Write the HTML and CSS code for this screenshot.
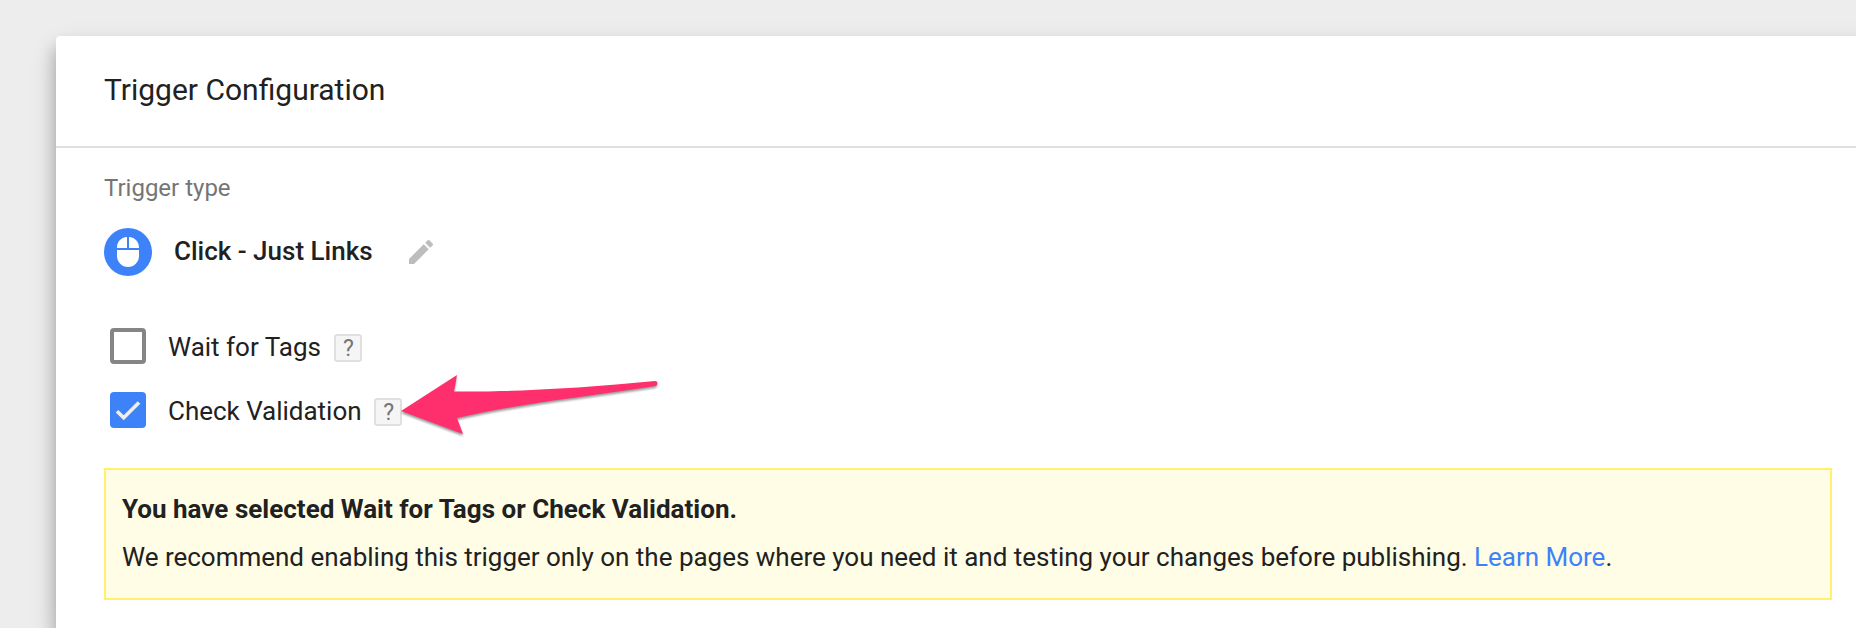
FILE: index.html
```html
<!DOCTYPE html>
<html lang="en">
<head>
<meta charset="utf-8">
<title>Trigger Configuration</title>
<link rel="stylesheet" href="styles.css">
</head>
<body>
<main class="card">
  <header class="card-header"><h1 class="title">Trigger Configuration</h1></header>
  <section class="content">
    <div class="label">Trigger type</div>
    <div class="type-row">
      <svg class="type-icon" viewBox="0 0 48 48">
        <circle cx="24" cy="24" r="24" fill="#3d82f8"/>
        <path fill="#fff" d="M13 20C13 13.500 17 9.500 23 9.100V20ZM25 9.100C31 9.500 35 13.500 35 20H25ZM13 22H35V28A11 11 0 0 1 13 28Z"/>
      </svg>
      <span class="type-name">Click - Just Links</span>
      <svg class="edit" viewBox="3 3 18 18">
        <path fill="#bdbdbd" d="M3 17.250V21h3.750L17.810 9.940l-3.750-3.750L3 17.250zM20.710 7.040c.39-.39.39-1.020 0-1.410l-2.340-2.340c-.39-.39-1.020-.39-1.410 0l-1.830 1.830 3.750 3.750 1.830-1.830z"/>
      </svg>
    </div>
    <div class="options">
      <div class="option">
        <span class="checkbox"></span>
        <span class="option-name">Wait for Tags</span>
        <span class="help">?</span>
      </div>
      <div class="option">
        <span class="checkbox checked">
          <svg class="tick" viewBox="0 0 36 36"><path d="M7 19.200L13.700 25.800L29 10.500" fill="none" stroke="#eee" stroke-width="3.600"/></svg>
        </span>
        <span class="option-name validation">Check Validation</span>
        <span class="help">?
          <svg class="arrow" viewBox="0 0 270 80">
            <path fill="#ff2e6c" d="M1 41L57 5L54 21.500C115 22 185 18 255 11Q257.500 11 257.500 13.300Q257.500 15.500 255 16C185 27 115 34 57 48L63 64Z"/>
          </svg>
        </span>
      </div>
    </div>
    <div class="notice">
      <div class="notice-title">You have selected Wait for Tags or Check Validation.</div>
      <div class="notice-text">We recommend enabling this trigger only on the pages where you need it and testing your changes before publishing. <a class="link" href="#">Learn More</a>.</div>
    </div>
  </section>
</main>
</body>
</html>
```
FILE: styles.css
```css
* { box-sizing: border-box; }
body {
  margin: 0;
  height: 628px;
  overflow: hidden;
  padding: 36px 0 0 56px;
  background: #ededed;
  color: #212121;
  font: 26px/32px Roboto, sans-serif;
}
svg { display: block; }
.card {
  width: 1824px;
  height: 592px;
  background: #fff;
  border-radius: 4px 0 0 0;
  box-shadow: 0 12px 16px rgba(0, 0, 0, .24), 0 12px 28px rgba(0, 0, 0, .16);
}
.card-header {
  height: 112px;
  padding: 36px 48px 0;
  border-bottom: 2px solid #e0e0e0;
}
.title { margin: 0; font-size: 30px; line-height: 36px; font-weight: 400; }
.content { width: 1800px; padding: 24px 24px 0 48px; }
.label { font-size: 24px; color: #757575; }
.type-row { display: flex; align-items: center; height: 48px; margin-top: 24px; }
.type-icon { width: 48px; height: 48px; }
.type-name { margin-left: 22px; padding-bottom: 2px; font-weight: 500; }
.edit { width: 24px; height: 24px; margin-left: 36px; }
.options { display: flex; flex-direction: column; gap: 28px; margin: 52px 0 40px 6px; }
.option { display: flex; align-items: center; height: 36px; }
.checkbox { width: 36px; height: 36px; border: 4px solid #858585; border-radius: 4px; }
.checked { border: 0; background: #3d82f8; }
.tick { width: 36px; height: 36px; }
.option-name { margin: 0 13px 0 22px; padding-top: 2px; }
.validation { margin-right: 12.600px; letter-spacing: -.02px; }
.help {
  position: relative;
  width: 28px;
  height: 28px;
  margin-top: 4px;
  padding-left: 1px;
  border: 2px solid #e0e0e0;
  border-radius: 3px;
  background: #f5f5f5;
  color: #757575;
  font-size: 23px;
  line-height: 25px;
  text-align: center;
}
.arrow {
  position: absolute;
  left: 24px;
  top: -30px;
  width: 270px;
  height: 80px;
  filter: drop-shadow(0 2px 1px rgba(0, 0, 0, .4));
}
.notice {
  height: 132px;
  padding: 23px 16px;
  border: 2px solid #fff16d;
  background: #fffde5;
}
.notice-title { margin-bottom: 16px; font-weight: 700; letter-spacing: .015px; }
.notice-text { letter-spacing: -.01px; }
.link { color: #3d82f8; text-decoration: none; }
```
